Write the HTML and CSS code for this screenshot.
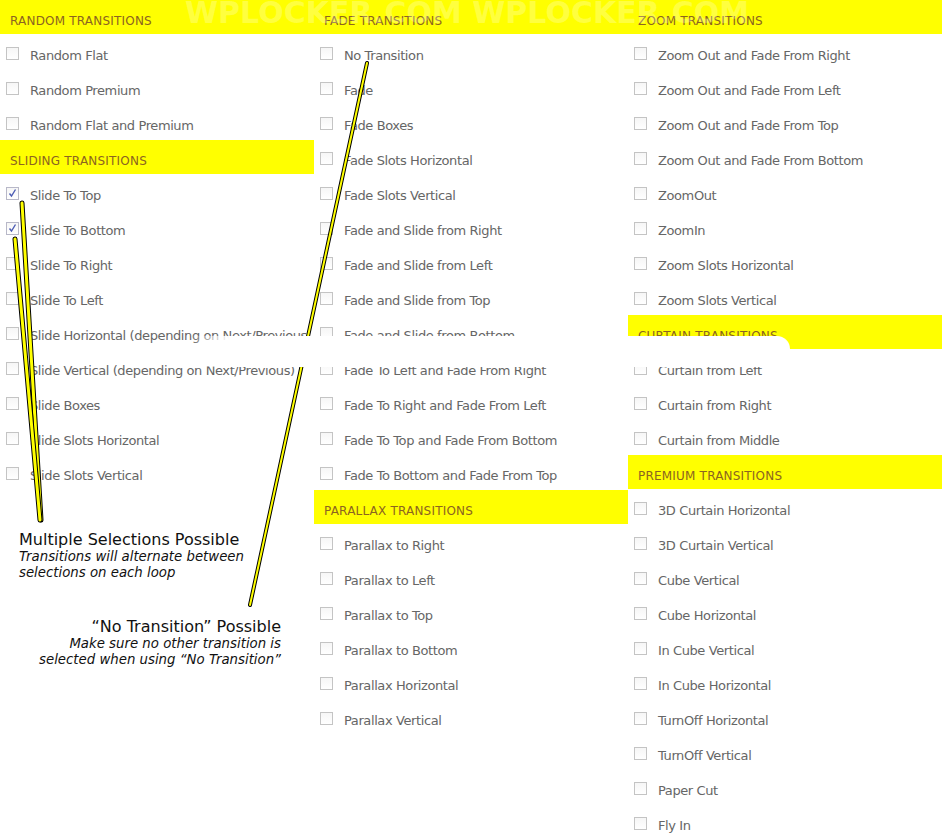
FILE: index.html
```html
<!DOCTYPE html>
<html>
<head>
<meta charset="utf-8">
<link rel="stylesheet" href="styles.css">
</head>
<body>
<div class="page">
  <div class="col">
    <div class="hd">RANDOM TRANSITIONS</div>
    <div class="it"><span class="cb"></span><span class="tx">Random Flat</span></div>
    <div class="it"><span class="cb"></span><span class="tx">Random Premium</span></div>
    <div class="it"><span class="cb"></span><span class="tx">Random Flat and Premium</span></div>
    <div class="hd">SLIDING TRANSITIONS</div>
    <div class="it"><span class="cb on"><svg viewBox="0 0 11 11" width="11" height="11"><path d="M2.5 5.5 L4.5 8 L8.5 1.5" fill="none" stroke="#4c5cb4" stroke-width="1.4"/></svg></span><span class="tx">Slide To Top</span></div>
    <div class="it"><span class="cb on"><svg viewBox="0 0 11 11" width="11" height="11"><path d="M2.5 5.5 L4.5 8 L8.5 1.5" fill="none" stroke="#4c5cb4" stroke-width="1.4"/></svg></span><span class="tx">Slide To Bottom</span></div>
    <div class="it"><span class="cb"></span><span class="tx">Slide To Right</span></div>
    <div class="it"><span class="cb"></span><span class="tx">Slide To Left</span></div>
    <div class="it"><span class="cb"></span><span class="tx">Slide Horizontal (depending on Next/Previous</span></div>
    <div class="it"><span class="cb"></span><span class="tx">Slide Vertical (depending on Next/Previous)</span></div>
    <div class="it"><span class="cb"></span><span class="tx">Slide Boxes</span></div>
    <div class="it"><span class="cb"></span><span class="tx">Slide Slots Horizontal</span></div>
    <div class="it"><span class="cb"></span><span class="tx">Slide Slots Vertical</span></div>
    <div class="note">
      <div class="nh">Multiple Selections Possible</div>
      <div class="ni">Transitions will alternate between<br>selections on each loop</div>
    </div>
    <div class="note right">
      <div class="nh">“No Transition” Possible</div>
      <div class="ni">Make sure no other transition is<br>selected when using “No Transition”</div>
    </div>
  </div>
  <div class="col">
    <div class="hd">FADE TRANSITIONS</div>
    <div class="it"><span class="cb"></span><span class="tx">No Transition</span></div>
    <div class="it"><span class="cb"></span><span class="tx">Fade</span></div>
    <div class="it"><span class="cb"></span><span class="tx">Fade Boxes</span></div>
    <div class="it"><span class="cb"></span><span class="tx">Fade Slots Horizontal</span></div>
    <div class="it"><span class="cb"></span><span class="tx">Fade Slots Vertical</span></div>
    <div class="it"><span class="cb"></span><span class="tx">Fade and Slide from Right</span></div>
    <div class="it"><span class="cb"></span><span class="tx">Fade and Slide from Left</span></div>
    <div class="it"><span class="cb"></span><span class="tx">Fade and Slide from Top</span></div>
    <div class="it"><span class="cb"></span><span class="tx">Fade and Slide from Bottom</span></div>
    <div class="it"><span class="cb"></span><span class="tx">Fade To Left and Fade From Right</span></div>
    <div class="it"><span class="cb"></span><span class="tx">Fade To Right and Fade From Left</span></div>
    <div class="it"><span class="cb"></span><span class="tx">Fade To Top and Fade From Bottom</span></div>
    <div class="it"><span class="cb"></span><span class="tx">Fade To Bottom and Fade From Top</span></div>
    <div class="hd">PARALLAX TRANSITIONS</div>
    <div class="it"><span class="cb"></span><span class="tx">Parallax to Right</span></div>
    <div class="it"><span class="cb"></span><span class="tx">Parallax to Left</span></div>
    <div class="it"><span class="cb"></span><span class="tx">Parallax to Top</span></div>
    <div class="it"><span class="cb"></span><span class="tx">Parallax to Bottom</span></div>
    <div class="it"><span class="cb"></span><span class="tx">Parallax Horizontal</span></div>
    <div class="it"><span class="cb"></span><span class="tx">Parallax Vertical</span></div>
  </div>
  <div class="col">
    <div class="hd">ZOOM TRANSITIONS</div>
    <div class="it"><span class="cb"></span><span class="tx">Zoom Out and Fade From Right</span></div>
    <div class="it"><span class="cb"></span><span class="tx">Zoom Out and Fade From Left</span></div>
    <div class="it"><span class="cb"></span><span class="tx">Zoom Out and Fade From Top</span></div>
    <div class="it"><span class="cb"></span><span class="tx">Zoom Out and Fade From Bottom</span></div>
    <div class="it"><span class="cb"></span><span class="tx">ZoomOut</span></div>
    <div class="it"><span class="cb"></span><span class="tx">ZoomIn</span></div>
    <div class="it"><span class="cb"></span><span class="tx">Zoom Slots Horizontal</span></div>
    <div class="it"><span class="cb"></span><span class="tx">Zoom Slots Vertical</span></div>
    <div class="hd">CURTAIN TRANSITIONS</div>
    <div class="it"><span class="cb"></span><span class="tx">Curtain from Left</span></div>
    <div class="it"><span class="cb"></span><span class="tx">Curtain from Right</span></div>
    <div class="it"><span class="cb"></span><span class="tx">Curtain from Middle</span></div>
    <div class="hd">PREMIUM TRANSITIONS</div>
    <div class="it"><span class="cb"></span><span class="tx">3D Curtain Horizontal</span></div>
    <div class="it"><span class="cb"></span><span class="tx">3D Curtain Vertical</span></div>
    <div class="it"><span class="cb"></span><span class="tx">Cube Vertical</span></div>
    <div class="it"><span class="cb"></span><span class="tx">Cube Horizontal</span></div>
    <div class="it"><span class="cb"></span><span class="tx">In Cube Vertical</span></div>
    <div class="it"><span class="cb"></span><span class="tx">In Cube Horizontal</span></div>
    <div class="it"><span class="cb"></span><span class="tx">TurnOff Horizontal</span></div>
    <div class="it"><span class="cb"></span><span class="tx">TurnOff Vertical</span></div>
    <div class="it"><span class="cb"></span><span class="tx">Paper Cut</span></div>
    <div class="it"><span class="cb"></span><span class="tx">Fly In</span></div>
  </div>

  <div class="wm" aria-hidden="true">WPLOCKER.COM WPLOCKER.COM</div>

  <svg class="lines" width="942" height="840" viewBox="0 0 942 840">
    <g fill="none" stroke-linecap="round">
      <path d="M22 203 L41 520" stroke="#000" stroke-width="5"/>
      <path d="M22 203 L41 520" stroke="#ffff00" stroke-width="3"/>
      <path d="M15 239 L40 520" stroke="#000" stroke-width="5"/>
      <path d="M15 239 L40 520" stroke="#ffff00" stroke-width="3"/>
      <path d="M367 63 L250 605" stroke="#000" stroke-width="4"/>
      <path d="M367 63 L250 605" stroke="#ffff00" stroke-width="2"/>
    </g>
  </svg>

  <div class="band"></div>
</div>
</body>
</html>
```

FILE: styles.css
```css
* { box-sizing: border-box; }
html, body { margin: 0; padding: 0; background: #fff; }
body { font-family: "DejaVu Sans", Verdana, sans-serif; }

.page {
  position: relative;
  width: 942px;
  height: 840px;
  overflow: hidden;
  display: grid;
  grid-template-columns: 314px 314px 314px;
  align-items: start;
}

.col { display: flex; flex-direction: column; }

.hd {
  height: 34px;
  margin-bottom: 1px;
  background: #ffff00;
  color: #8c6420;
  font-size: 12px;
  line-height: 16px;
  letter-spacing: 0.2px;
  padding: 13px 0 0 10px;
  white-space: nowrap;
}

.it {
  height: 35px;
  display: flex;
  align-items: flex-start;
  white-space: nowrap;
}

.cb {
  width: 13px;
  height: 13px;
  margin: 12px 0 0 6px;
  border: 1px solid #c4c4c4;
  background: linear-gradient(#f6f6f6, #ffffff);
  flex: none;
  display: flex;
  align-items: center;
  justify-content: center;
}
.cb.on { border-color: #b8b8c8; }
.cb svg { display: block; }

.tx {
  margin-left: 11px;
  padding-top: 13px;
  font-size: 13px;
  line-height: 16px;
  letter-spacing: -0.4px;
  color: #666;
}

.note { padding-left: 19px; margin-top: 41px; color: #111; }
.note.right { text-align: right; padding-left: 0; padding-right: 33px; margin-top: 37px; }
.nh { font-size: 16px; line-height: 18px; }
.ni { font-size: 13.3px; line-height: 16px; font-style: italic; }

.wm {
  position: absolute;
  left: 185px;
  top: -5px;
  font-size: 30px;
  font-weight: bold;
  color: rgba(255, 255, 255, 0.25);
  white-space: nowrap;
  pointer-events: none;
}

.lines { position: absolute; left: 0; top: 0; pointer-events: none; }

.band {
  position: absolute;
  left: 190px;
  top: 336px;
  width: 600px;
  height: 31px;
  background: linear-gradient(to right, rgba(255,255,255,0), #fff 40px);
  border-top-right-radius: 13px;
}
```
